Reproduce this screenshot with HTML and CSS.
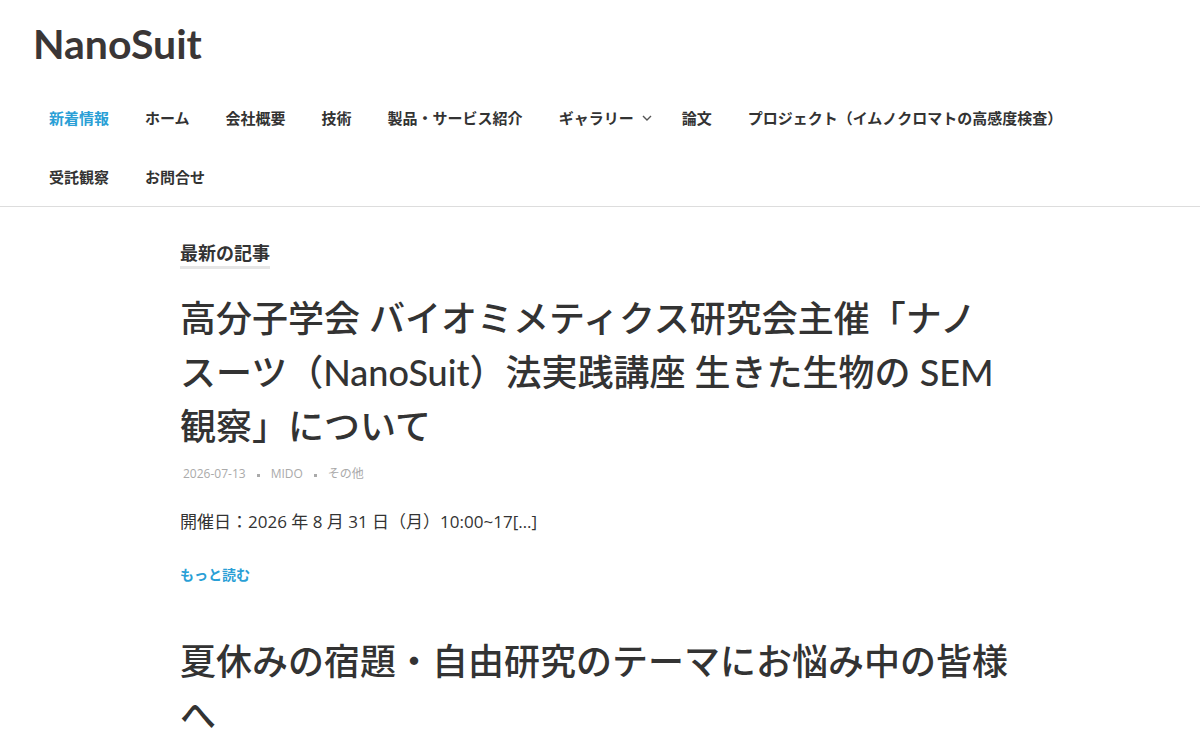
FILE: index.html
```html
<!DOCTYPE html>
<html lang="ja">
<head>
    <meta charset="UTF-8">
    <meta name="viewport" content="width=device-width, initial-scale=1.0">
    <title>新着情報 - NanoSuit</title>
    <link rel="stylesheet" href="styles.css">
</head>
<body>
    <header class="site-header">
        <div class="site-title"><a href="#">NanoSuit</a></div>

        <nav class="main-nav">
            <ul>
                <li class="current"><a href="#">新着情報</a></li>
                <li><a href="#">ホーム</a></li>
                <li><a href="#">会社概要</a></li>
                <li><a href="#">技術</a></li>
                <li><a href="#">製品・サービス紹介</a></li>
                <li class="has-sub">
                    <a href="#">ギャラリー
                        <svg class="chevron" width="10" height="6" viewBox="0 0 10 6">
                            <path d="M1 1l4 4 4-4" fill="none" stroke="#555" stroke-width="1.4"/>
                        </svg>
                    </a>
                </li>
                <li><a href="#">論文</a></li>
                <li><a href="#">プロジェクト（イムノクロマトの高感度検査）</a></li>
                <li><a href="#">受託観察</a></li>
                <li><a href="#">お問合せ</a></li>
            </ul>
        </nav>
    </header>

    <main class="content">
        <h2 class="section-label">最新の記事</h2>

        <article class="post">
            <h1 class="post-title"><a href="#">高分子学会 バイオミメティクス研究会主催「ナノスーツ（NanoSuit）法実践講座 生きた生物の SEM 観察」について</a></h1>
            <div class="post-meta">
                <span>2026-07-13</span>
                <span class="dot"></span>
                <span>MIDO</span>
                <span class="dot"></span>
                <span>その他</span>
            </div>
            <p class="excerpt">開催日：2026 年 8 月 31 日（月）10:00~17[…]</p>
            <a class="more" href="#">もっと読む</a>
        </article>

        <article class="post">
            <h1 class="post-title"><a href="#">夏休みの宿題・自由研究のテーマにお悩み中の皆様へ</a></h1>
        </article>
    </main>
</body>
</html>
```

FILE: styles.css
```css
body {
    font-family: "Lato", "Noto Sans CJK JP", sans-serif;
    background: #fff;
    color: #333;
    margin: 0;
}
a { color: inherit; text-decoration: none; }

.site-header { border-bottom: 1px solid #ddd; }
.site-title {
    padding: 22px 33px 0;
    height: 66px;
    font-size: 41px;
    font-weight: 700;
    line-height: 44px;
    color: #3a3636;
}

.main-nav ul {
    list-style: none;
    margin: 0;
    padding: 0 31px;
    display: flex;
    flex-wrap: wrap;
}
.main-nav li a {
    display: flex;
    align-items: center;
    height: 59px;
    padding: 0 18px;
    font-size: 15px;
    font-weight: 700;
    color: #333;
}
.main-nav li.current a { color: #2a9fd6; }
.main-nav .chevron { margin: 1px -6px 0 8px; }

.content {
    padding: 34px 190px 0 180px;
}
.section-label {
    display: inline-block;
    margin: 0;
    font-size: 18px;
    font-weight: 700;
    line-height: 24px;
    color: #333;
    border-bottom: 3px solid #e6e6e6;
    padding-bottom: 1px;
}

.post { margin-top: 22px; }
.post + .post { margin-top: 49px; }
.post-title {
    margin: 0;
    font-size: 36px;
    font-weight: 500;
    line-height: 54px;
    color: #333;
}
.post-meta {
    display: flex;
    align-items: center;
    gap: 10px;
    margin: 12px 0 0 3px;
    font-family: "Open Sans", "Noto Sans CJK JP", sans-serif;
    font-size: 12px;
    line-height: 18px;
    color: #aaa;
}
.post-meta .dot {
    width: 3px;
    height: 3px;
    background: #aaa;
    margin: 2px 1px 0;
}
.excerpt {
    margin: 27px 0 0;
    font-family: "Open Sans", "Noto Sans CJK JP", sans-serif;
    font-size: 17px;
    line-height: 24px;
    color: #333;
}
.more {
    display: inline-block;
    margin-top: 31px;
    font-size: 14px;
    font-weight: 700;
    line-height: 20px;
    color: #2a9fd6;
}
```
